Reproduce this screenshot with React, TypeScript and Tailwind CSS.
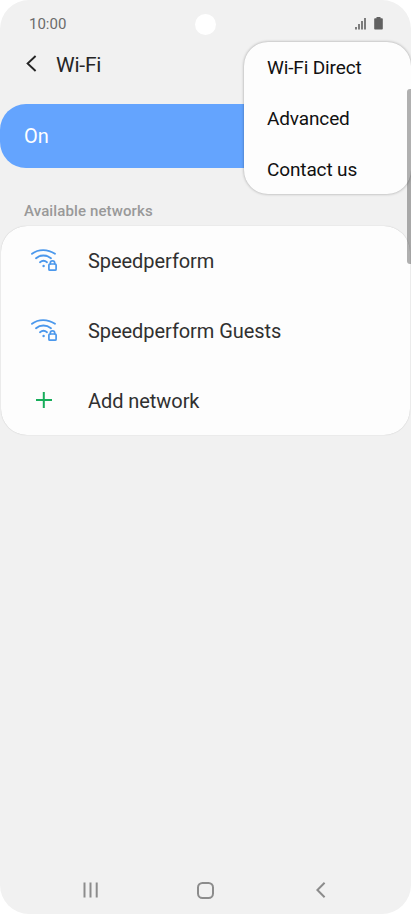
const networks = ["Speedperform", "Speedperform Guests"];

const menuItems = ["Wi-Fi Direct", "Advanced", "Contact us"];

function WifiLock() {
  return (
    <svg className="relative -top-[0.5px]" width="28" height="24" viewBox="0 0 28 24" fill="none" stroke="#4b98ec" strokeWidth="1.9" strokeLinecap="round">
      <path d="M2 5.8C8.4 .9 17.6 .9 25 5.8" />
      <path d="M6 10.2C10.3 6.6 16.4 6.6 21 10.2" />
      <path d="M10 14.2C12 12.6 15 12.6 17 14.2" />
      <circle cx="13.6" cy="18" r="1.2" fill="#4b98ec" stroke="none" />
      <rect x="18.9" y="16" width="7.2" height="6.2" rx="1" strokeWidth="1.7" />
      <path d="M20.3 15.8V15a2.2 2.2 0 0 1 4.4 0V15.8" strokeWidth="1.7" />
    </svg>
  );
}

function StatusBar() {
  return (
    <div className="relative flex h-[47px] items-center justify-between pr-7 pl-[29px] text-[#6b6b6b]">
      <span className="relative top-px text-[15px] leading-none">10:00</span>
      {/* Camera cutout */}
      <span className="absolute top-[13.5px] left-[194.5px] size-[21px] rounded-full bg-white" />
      <div className="relative -top-[0.5px] flex items-end gap-2">
        <svg width="11" height="13" viewBox="0 0 11 13" fill="#7d7d7d">
          <path d="M0 10h2v2.5H0zM3 7h2v5.5H3zM6 4h2v8.5H6zM9 1h2v11.5H9z" />
        </svg>
        <svg className="relative -left-[0.5px]" width="9" height="13" viewBox="0 0 9 13" fill="#616161">
          <path d="M2.5 0h4v1.2H8a.8.8 0 0 1 .8.8v9.7a.8.8 0 0 1-.8.8H1a.8.8 0 0 1-.8-.8V2A.8.8 0 0 1 1 1.2h1.5z" />
        </svg>
      </div>
    </div>
  );
}

function OverflowMenu() {
  return (
    <div className="absolute top-[42px] left-[244px] flex h-[152px] w-[167px] flex-col rounded-[24px] bg-[#fdfdfd] pt-px pl-[23px] text-[19px] text-[#111] shadow-[0_0_3px_rgba(0,0,0,0.35)]">
      {menuItems.map((label) => (
        <span key={label} className="flex h-[51px] shrink-0 items-center tracking-[-0.13px]">
          {label}
        </span>
      ))}
    </div>
  );
}

export default function App() {
  return (
    <div className="h-[914px] w-[411px] bg-white font-[Roboto,sans-serif]">
      <div className="relative flex h-full flex-col overflow-hidden rounded-[29px] bg-[#f1f1f1]">
        <StatusBar />

        <header className="flex h-[34px] items-center pl-[26px] text-[#252525]">
          <svg className="relative -top-[0.5px]" width="11" height="17" viewBox="0 0 11 17" fill="none" stroke="currentColor" strokeWidth="1.9">
            <path d="M9.6 1 1.6 8.5l8 7.5" />
          </svg>
          <h1 className="relative top-px ml-[19px] text-[21px] leading-none tracking-[-0.2px]">Wi-Fi</h1>
        </header>

        <div className="mt-[22.5px] flex h-16 shrink-0 items-center rounded-[26px] bg-[#64a4fe] pl-6 text-xl text-white">
          On
        </div>

        <h2 className="mt-[33px] ml-6 text-[15px] leading-5 font-medium tracking-[0.12px] text-[#999]">
          Available networks
        </h2>

        <section className="mx-px mt-[5px] h-[209px] rounded-[26px] bg-[#fdfdfd] text-xl tracking-[-0.06px] text-[#303030] shadow-[0_0_1px_rgba(0,0,0,0.25)]">
          {networks.map((name) => (
            <div key={name} className="flex h-[70px] items-center pl-[29px]">
              <WifiLock />
              <span className="ml-[30px]">{name}</span>
            </div>
          ))}
          <div className="flex h-[70px] items-center pl-[35px]">
            <svg className="relative -top-px" width="16" height="16" viewBox="0 0 16 16" stroke="#17ad5b" strokeWidth="2">
              <path d="M7.8 0v16M0 8h16" />
            </svg>
            <span className="ml-9">Add network</span>
          </div>
        </section>

        <nav className="mt-auto flex h-12 items-center text-[#8c8c8c]">
          <svg className="ml-[83px]" width="16" height="16" viewBox="0 0 16 16" stroke="currentColor" strokeWidth="2">
            <path d="M1.5.5v15M7.5.5v15M13.7.5v15" />
          </svg>
          <svg className="ml-[98px]" width="17" height="17" viewBox="0 0 17 17" fill="none" stroke="currentColor" strokeWidth="2">
            <rect x="1" y="1" width="15" height="15" rx="4.5" />
          </svg>
          <svg className="ml-[102px]" width="10" height="16" viewBox="0 0 10 16" fill="none" stroke="currentColor" strokeWidth="2">
            <path d="M8.6.8 1.4 8l7.2 7.2" />
          </svg>
        </nav>

        <OverflowMenu />
        {/* Scrollbar thumb */}
        <div className="absolute top-[89px] right-0 h-[175px] w-1 rounded-l-[3px] bg-black/30" />
      </div>
    </div>
  );
}
